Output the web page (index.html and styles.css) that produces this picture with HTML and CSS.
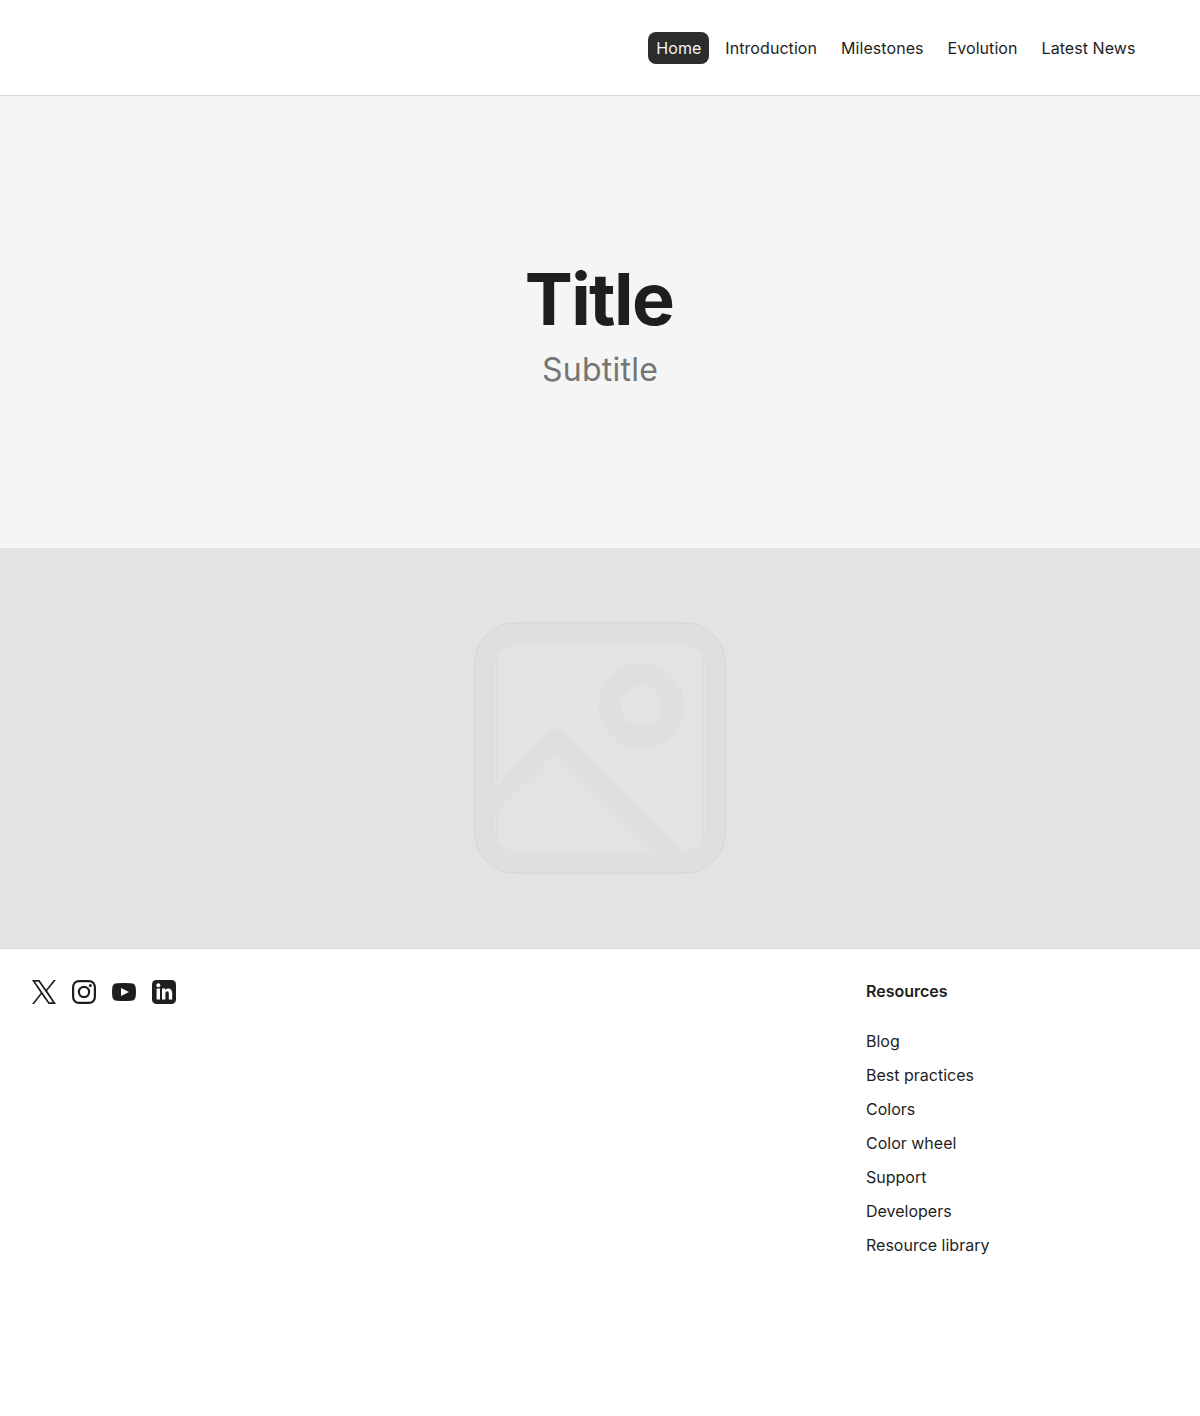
FILE: index.html
```html
<!DOCTYPE html>
<html lang="en">
<head>
<meta charset="utf-8">
<title>Title</title>
<link rel="stylesheet" href="styles.css">
</head>
<body>
<header class="header">
  <nav class="nav">
    <a class="nav-link active">Home</a>
    <a class="nav-link">Introduction</a>
    <a class="nav-link">Milestones</a>
    <a class="nav-link">Evolution</a>
    <a class="nav-link">Latest News</a>
  </nav>
</header>
<main>
  <section class="hero">
    <h1 class="title">Title</h1>
    <p class="subtitle">Subtitle</p>
  </section>
  <section class="picture">
    <svg class="placeholder" width="252" height="252" viewBox="0 0 252 252" fill="none">
      <rect class="band" x="11.500" y="11.500" width="229" height="229" rx="30.500"/>
      <circle class="band" cx="167.500" cy="84" r="31.500"/>
      <path class="mountain" d="M15 184L82 117L203 238"/>
      <rect class="outline" x="1" y="1" width="250" height="250" rx="41"/>
      <path class="outline-soft" d="M22.500 160V42Q22.500 22.500 42 22.500H210Q229.500 22.500 229.500 42V210Q229.500 229 210 229M180 229H42Q22.500 229 22.500 210V193"/>
      <circle class="outline-ring" cx="167.500" cy="84" r="41.800"/>
      <circle class="outline-ring" cx="167.500" cy="84" r="21.200"/>
    </svg>
  </section>
</main>
<footer class="footer">
  <div class="social">
    <svg width="24" height="24" viewBox="0 0 24 24"><path fill="#1e1e1e" fill-rule="evenodd" d="M0 0H7.400L14.200 9.500L21.700 0H23.900L15.200 10.700L24 24H16.500L9.600 14.300L2.100 24H0L8.700 12.900ZM3.100 1.700L17.300 22.300H20.800L6.600 1.700Z"/></svg>
    <svg width="24" height="24" viewBox="0 0 24 24" fill="none" stroke="#1e1e1e" stroke-width="2.200"><rect x="1.100" y="1.100" width="21.800" height="21.800" rx="5.900"/><circle cx="12" cy="12" r="5.100"/><circle cx="18.400" cy="5.600" r="1.500" fill="#1e1e1e" stroke="none"/></svg>
    <svg width="24" height="24" viewBox="0 0 24 24"><path fill="#1e1e1e" fill-rule="evenodd" d="M5 3.300Q12 2.700 19 3.300Q23 3.500 23.600 7Q24.300 12 23.600 17Q23 20.500 19 20.700Q12 21.300 5 20.700Q1 20.500 .4 17Q-.3 12 .4 7Q1 3.500 5 3.300ZM9 8V16L17 12Z"/></svg>
    <svg width="24" height="24" viewBox="0 0 24 24"><rect width="24" height="24" rx="4.500" fill="#1e1e1e"/><circle cx="6.300" cy="5.200" r="2" fill="#fff"/><path fill="#fff" d="M4.600 8.500H8V19.500H4.600ZM10 8.500H13.300V10C15 7.400 20.200 7.900 20.200 13V19.500H16.800V13.700C16.800 10.400 13.400 10.700 13.400 13.700V19.500H10Z"/></svg>
  </div>
  <section class="resources">
    <h2 class="resources-title">Resources</h2>
    <ul class="resource-list">
      <li>Blog</li><li>Best practices</li><li>Colors</li><li>Color wheel</li><li>Support</li><li>Developers</li><li>Resource library</li>
    </ul>
  </section>
</footer>
</body>
</html>
```
FILE: styles.css
```css
* { box-sizing: border-box; }
body { margin: 0; background: #fff; color: #1e1e1e; font: 400 16px/22.4px Inter, sans-serif; }
.header { height: 96px; padding: 32px 56.5px; display: flex; justify-content: flex-end; border-bottom: 1px solid #d9d9d9; }
.nav { display: flex; gap: 8px; letter-spacing: .065px; }
.nav-link { height: 32px; padding: 8px; border-radius: 8px; line-height: 16px; }
.active { background: #2c2c2c; color: #f5f5f5; }
.hero { height: 452px; background: #f5f5f5; display: flex; flex-direction: column; align-items: center; justify-content: center; gap: 8px; }
.title { margin: 0; padding-right: 2px; font-size: 72px; line-height: 86px; font-weight: 700; letter-spacing: -1.6px; }
.subtitle { margin: 0; padding-top: 1px; font-size: 32px; line-height: 38px; letter-spacing: .25px; color: #757575; }
.picture { height: 400px; background: #e3e3e3; display: flex; align-items: center; justify-content: center; }
.outline { stroke: #d8d8d8; stroke-width: 1.6; }
.outline-soft { stroke: #dcdcdc; stroke-width: 1; }
.outline-ring { stroke: #d9d9d9; stroke-width: 1; stroke-dasharray: 5 2; }
.band { stroke: #dfdfdf; stroke-width: 18; }
.mountain { stroke: #dfdfdf; stroke-width: 19; stroke-linejoin: round; }
.footer { height: 468px; padding: 31px 32px; border-top: 1px solid #d9d9d9; display: flex; justify-content: space-between; }
.social { display: flex; gap: 16px; }
.resources { width: 302px; }
.resources-title { margin: 0 0 28px; font-size: 16px; line-height: 22px; font-weight: 600; }
.resource-list { margin: 0; padding: 0; list-style: none; display: flex; flex-direction: column; gap: 12px; line-height: 22px; }
```
